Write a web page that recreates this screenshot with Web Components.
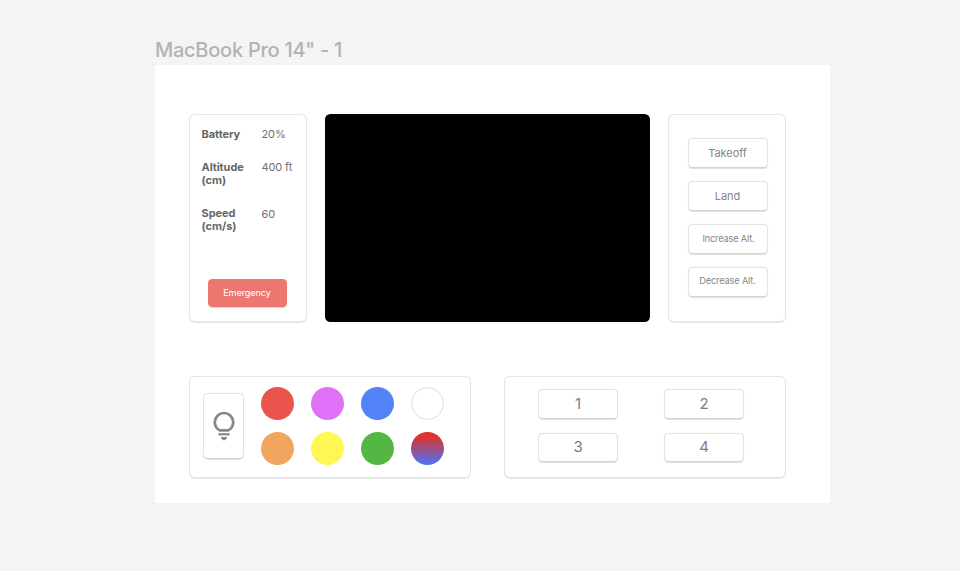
<!DOCTYPE html>
<html lang="en">
<head>
<meta charset="utf-8">
<title>Drone control</title>
<style>
html,body{margin:0;height:100%;background:#f4f4f4;overflow:hidden}
body{font-family:Inter,"Liberation Sans",sans-serif}
</style>
</head>
<body>
<drone-console></drone-console>
<script>
class Base extends HTMLElement {
  constructor() {
    super();
    this.attachShadow({mode: 'open'}).innerHTML = this.constructor.markup;
  }
}

class UiPanel extends Base {
  static markup = `<style>
    :host{display:block;box-sizing:border-box;background:#fff;border:1px solid #e6e6e6;border-radius:6px;box-shadow:0 .5px .8px rgba(0,0,0,.1)}
  </style><slot></slot>`;
}

class UiButton extends Base {
  static markup = `<style>
    :host{display:flex;align-items:center;justify-content:center;box-sizing:border-box;width:80px;height:29.5px;
      background:#fff;border:1px solid #e3e3e3;border-bottom-color:#d4d4d4;border-radius:4.5px;box-shadow:0 .5px .8px rgba(0,0,0,.13);
      color:#858585;font-size:11px;letter-spacing:-.08px;line-height:14px;white-space:nowrap}
    :host([kind=small]){font-size:9.2px;letter-spacing:-.15px}
    :host([kind=number]){font-size:15px;color:#7d7d7d}
    :host([kind=danger]){width:79px;height:28px;background:#ec7770;border:0;color:#fff;font-size:9.1px;box-shadow:0 .5px 1px rgba(0,0,0,.18)}
    :host([kind=light]){width:41px;height:65.5px;border-radius:5px}
  </style><slot></slot>`;
}

class StatRow extends Base {
  static markup = `<style>
    :host{display:grid;grid-template-columns:60px 1fr;align-items:start;color:#666;font-size:11px;line-height:13.3px}
    .label{font-weight:700;color:#666;letter-spacing:-.06px}
    .value{font-weight:400;color:#707070;letter-spacing:-.12px}
  </style><div class="label"><slot name="label"></slot></div><div class="value"><slot></slot></div>`;
}

class BulbIcon extends Base {
  static markup = `<style>:host{display:block;width:24px;height:30px}svg{display:block}</style>
  <svg width="24" height="30" viewBox="0 0 24 30" fill="none" stroke="#878787">
    <path d="M7.8 19.4 C4.6 17.6 2.8 14.6 2.8 11.2 A9.2 9.2 0 0 1 21.2 11.2 C21.2 14.6 19.4 17.6 16.2 19.4 Z" stroke-width="2.7" stroke-linejoin="round"/>
    <path d="M6.4 23.3 H17.6" stroke-width="2.2"/>
    <path d="M9 26 H15 V27 L12.9 29.2 H11.1 L9 27 Z" fill="#878787" stroke="none"/>
  </svg>`;
}

class ColorSwatch extends Base {
  static markup = `<style>
    :host{display:block;box-sizing:border-box;width:33px;height:33px;border-radius:50%;background:var(--fill)}
    :host([outlined]){border:1px solid #dcdcdc}
  </style>`;
}

class DroneConsole extends Base {
  static markup = `<style>
    :host{display:block;box-sizing:border-box;width:960px;height:571px;padding:38px 130px 0 155px}
    h1{margin:0;height:27px;font-size:20px;font-weight:450;line-height:24px;color:#b3b3b3;letter-spacing:-.26px;white-space:nowrap}
    main{box-sizing:border-box;width:675px;height:437.5px;padding:49px 44px 0 34px;background:#fff}
    .top{display:flex;justify-content:space-between;height:208px}
    .bottom{display:flex;justify-content:space-between;margin-top:53.5px;height:102px}
    .stats{width:118px;padding:13px 0 0 11.5px}
    .stats stat-row{height:33px}
    .stats stat-row.alt{height:45.7px}
    .stats stat-row.speed{height:72.8px}
    .stats .sixty{display:block;padding-top:1px}
    .stats ui-button{margin-left:6px}
    .video{width:325px;background:#000;border-radius:5.5px}
    .actions{display:flex;flex-direction:column;align-items:center;gap:13.6px;width:118px;padding:23px 0 0 1px}
    .actions .inc{padding-left:2px}
    .actions .dec{padding-bottom:3px}
    .lights{display:flex;width:282.4px;padding:10.5px 0 0 13.4px}
    .lights>ui-button{margin-top:6px}
    .swatches{display:grid;grid-template-columns:repeat(4,33px);grid-auto-rows:33px;gap:12.2px 17px;margin-left:16.8px}
    .presets{display:grid;grid-template-columns:80px 80px;grid-auto-rows:29.5px;gap:14px 46px;width:282.4px;padding:12.6px 0 0 33.4px}
  </style>
  <h1>MacBook Pro 14" - 1</h1>
  <main>
    <div class="top">
      <ui-panel class="stats">
        <stat-row><span slot="label">Battery</span>20%</stat-row>
        <stat-row class="alt"><span slot="label">Altitude<br>(cm)</span>400 ft</stat-row>
        <stat-row class="speed"><span slot="label">Speed<br>(cm/s)</span><span class="sixty">60</span></stat-row>
        <ui-button kind="danger">Emergency</ui-button>
      </ui-panel>
      <div class="video"></div>
      <ui-panel class="actions">
        <ui-button>Takeoff</ui-button>
        <ui-button>Land</ui-button>
        <ui-button kind="small" class="inc">Increase Alt.</ui-button>
        <ui-button kind="small" class="dec">Decrease Alt.</ui-button>
      </ui-panel>
    </div>
    <div class="bottom">
      <ui-panel class="lights">
        <ui-button kind="light"><bulb-icon></bulb-icon></ui-button>
        <div class="swatches">
          <color-swatch style="--fill:#eb544d"></color-swatch>
          <color-swatch style="--fill:#e070f8"></color-swatch>
          <color-swatch style="--fill:#5283f7"></color-swatch>
          <color-swatch outlined style="--fill:#fff"></color-swatch>
          <color-swatch style="--fill:#f2a55f"></color-swatch>
          <color-swatch style="--fill:#fef754"></color-swatch>
          <color-swatch style="--fill:#55b743"></color-swatch>
          <color-swatch style="--fill:linear-gradient(#e03229 12%,#5270ef 95%)"></color-swatch>
        </div>
      </ui-panel>
      <ui-panel class="presets">
        <ui-button kind="number">1</ui-button>
        <ui-button kind="number">2</ui-button>
        <ui-button kind="number">3</ui-button>
        <ui-button kind="number">4</ui-button>
      </ui-panel>
    </div>
  </main>`;
}

customElements.define('ui-panel', UiPanel);
customElements.define('ui-button', UiButton);
customElements.define('stat-row', StatRow);
customElements.define('bulb-icon', BulbIcon);
customElements.define('color-swatch', ColorSwatch);
customElements.define('drone-console', DroneConsole);
</script>
</body>
</html>
